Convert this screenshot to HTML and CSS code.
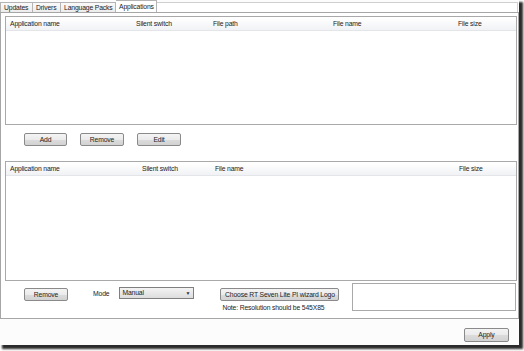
FILE: index.html
```html
<!DOCTYPE html>
<html>
  <head>
    <meta charset="UTF-8">
    <title>Applications</title>
    <link rel="stylesheet" href="styles.css">
  </head>
  <body>
  <div class="window">
    <div class="tabs">
      <div class="tab">Updates</div>
      <div class="tab">Drivers</div>
      <div class="tab">Language Packs</div>
      <div class="tab active">Applications</div>
      <div class="tab-rest"></div>
    </div>
    <div class="panel">
      <div class="list list-top">
        <div class="head head-top">
          <span>Application name</span>
          <span>Silent switch</span>
          <span>File path</span>
          <span>File name</span>
          <span>File size</span>
        </div>
      </div>
      <div class="btn-row">
        <div class="btn btn-add">Add</div>
        <div class="btn btn-remove">Remove</div>
        <div class="btn btn-edit">Edit</div>
      </div>
      <div class="list list-bottom">
        <div class="head head-bottom">
          <span>Application name</span>
          <span>Silent switch</span>
          <span>File name</span>
          <span>File size</span>
        </div>
      </div>
      <div class="bottom-row">
        <div class="btn btn-remove2">Remove</div>
        <div class="mode">Mode</div>
        <div class="select">Manual<span class="arrow">&#9660;</span></div>
        <div class="logo-col">
          <div class="btn btn-logo">Choose RT Seven Lite PI wizard Logo</div>
          <div class="note">Note: Resolution should be 545X85</div>
        </div>
        <div class="logo-box"></div>
      </div>
    </div>
    <div class="footer">
      <div class="btn btn-apply">Apply</div>
    </div>
  </div>
  </body>
</html>
```

FILE: styles.css
```css
html, body {margin: 0; padding: 0; background: #ffffff;}
body {
    width: 524px;
    height: 351px;
    overflow: hidden;
    font-family: "Liberation Sans", Arial, sans-serif;
    font-size: 6.8px;
    letter-spacing: -0.15px;
    white-space: nowrap;
    color: #222;
}

.window {
    width: 519px;
    height: 345px;
    background: #fcfcfc;
    box-shadow: 3px 3px 2px 1px #2b2b2b;
    display: flex;
    flex-direction: column;
}

/* tab strip */
.tabs {
    display: flex;
    height: 12px;
    align-items: flex-end;
}
.tab {
    height: 10px;
    line-height: 10px;
    padding: 0 3px;
    border: 1px solid #b4b4b4;
    border-bottom: none;
    border-left: none;
    background: linear-gradient(#fafafa, #ececec);
    box-sizing: border-box;
    overflow: hidden;
}
.tab:first-child {border-left: 1px solid #b4b4b4; width: 33px;}
.tab:nth-child(2) {width: 28px;}
.tab:nth-child(3) {width: 55px;}
.tab.active {
    width: 41px;
    height: 12px;
    line-height: 11px;
    background: #ffffff;
}
.tab-rest {
    flex: 1;
    height: 10px;
    border-top: 1px solid #cfcfcf;
    border-right: 1px solid #cfcfcf;
    box-sizing: border-box;
    margin-right: 1px;
    background: #fff;
}

/* panel */
.panel {
    width: 519px;
    height: 307px;
    box-sizing: border-box;
    border: 1px solid #a6a6a6;
    background: #ffffff;
    padding: 0 1px 0 4px;
    display: flex;
    flex-direction: column;
}

.list {
    border: 1px solid #a9a9a9;
    background: #fff;
    box-sizing: border-box;
}
.list-top {margin-top: 3px; height: 109px;}
.list-bottom {margin-top: 15px; height: 120px;}

.head {
    display: grid;
    height: 12px;
    line-height: 12px;
    padding-left: 4px;
    background: linear-gradient(#ffffff, #f1f2f5);
    border-bottom: 1px solid #e4e5e8;
}
.head-top {grid-template-columns: 126px 77px 120px 125px 1fr; margin-top: 1px;}
.head-bottom {grid-template-columns: 132px 73px 244px 1fr; margin-top: 1px;}

/* buttons */
.btn {
    height: 13px;
    line-height: 11px;
    box-sizing: border-box;
    border: 1px solid #8a8a8a;
    border-radius: 2px;
    background: linear-gradient(#f4f4f4 0%, #ebebeb 50%, #dcdcdc 51%, #d2d2d2 100%);
    text-align: center;
}
.btn-row {
    display: flex;
    margin-top: 8px;
}
.btn-add {width: 43px; margin-left: 19px;}
.btn-remove {width: 44px; margin-left: 13px;}
.btn-edit {width: 44px; margin-left: 13px;}

.bottom-row {
    display: flex;
    align-items: flex-start;
    margin-top: 2px;
}
.btn-remove2 {width: 44px; margin-left: 19px; margin-top: 5px;}
.mode {margin-left: 25px; margin-top: 7px; line-height: 8px;}
.select {
    width: 75px;
    height: 12px;
    line-height: 10px;
    box-sizing: border-box;
    margin-left: 10px;
    margin-top: 4px;
    padding-left: 2px;
    border: 1px solid #7f7f7f;
    background: linear-gradient(#f3f3f3, #dddddd);
    display: flex;
    justify-content: space-between;
}
.arrow {font-size: 5px; padding-right: 3px; color: #333;}
.logo-col {margin-left: 26px; margin-top: 5px; width: 119px;}
.btn-logo {width: 119px; overflow: hidden;}
.note {margin-top: 3px; padding-left: 2px; line-height: 8px;}
.logo-box {
    margin-left: 13px;
    width: 164px;
    height: 28px;
    box-sizing: border-box;
    border: 1px solid #a9a9a9;
    background: #fff;
}

.footer {
    display: flex;
    justify-content: flex-end;
    padding: 9px 10px 0 0;
}
.btn-apply {width: 45px; height: 14px; line-height: 12px;}
```
